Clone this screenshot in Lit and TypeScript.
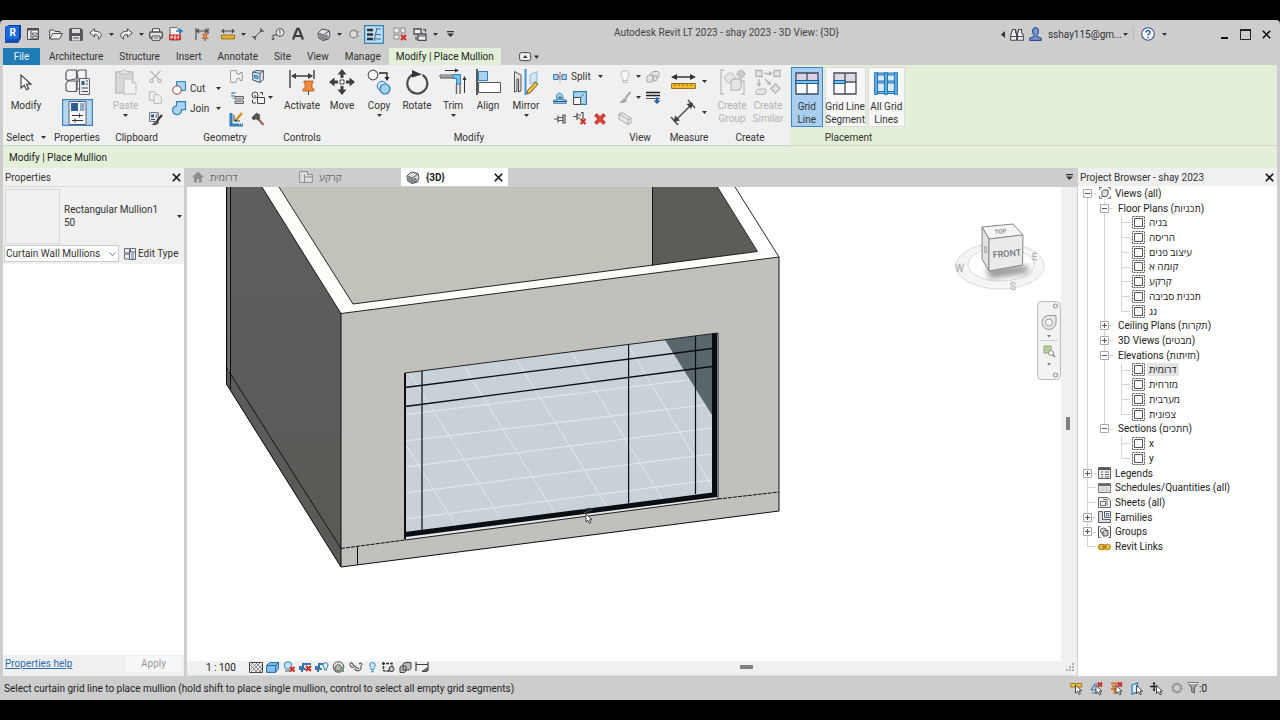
import { LitElement, html, svg, css, nothing } from "lit";
import { customElement, state } from "lit/decorators.js";
import { classMap } from "lit/directives/class-map.js";

const K = "#4a4d52";
const B = "#2f7fb8";
const LB = "#a9d3ef";

const ic = (w: number, h: number, body: unknown, vb = `0 0 ${w} ${h}`) =>
  html`<svg class="ic" width=${w} height=${h} viewBox=${vb} fill="none" aria-hidden="true">${body}</svg>`;

const tri = () => ic(5, 3, svg`<path d="M0 0h5L2.500 3z" fill="#333"/>`);

const cursor = (x: number, y: number) =>
  svg`<path transform="translate(${x} ${y})" d="M0 0v8l2-1.700 1.500 3 1.400-.7L3.500 5.700H6z" fill="#fff" stroke="#222" stroke-width=".8"/>`;

const redX = (x: number, y: number, s = 5) =>
  svg`<path d="M${x} ${y}l${s} ${s}M${x + s} ${y}l${-s} ${s}" stroke="#cf2a27" stroke-width="2"/>`;

const I: Record<string, () => unknown> = {
  logo: () => ic(16, 18, svg`<path d="M0 2 4 0h12v13l-3 5H0z" fill="#0c3f93"/><path d="M0 2h13v16H0z" fill="#164fae"/><path d="M1 1h13v13H1z" fill="#1a6be0"/><text x="4.500" y="11" font-family="Roboto" font-size="10" font-weight="700" fill="#fff">R</text>`),
  home: () => ic(12, 12, svg`<path d="M.5.5h11v11H.5z" fill="#eee" stroke="${K}"/><path d="M.5 1.500h11" stroke="${K}" stroke-width="2"/><path d="M4 3v8.500" stroke="${K}"/><path d="M5.500 5h5v2h-5zM5.500 8.500h5v2h-5z" stroke="${K}" stroke-width=".8"/>`),
  open: () => ic(14, 11, svg`<path d="M.7 10V1h4l1.300 1.500h5V4.500M.7 10l3-5.500h9.800L10.500 10z" fill="#eee" stroke="${K}"/>`),
  save: () => ic(14, 13, svg`<path d="M1 .7h11l1.300 1.300v10.300H.7V1z" fill="#55585d" stroke="${K}"/><path d="M3 1h8v4H3z" fill="#ddd"/><path d="M3 8h8v4.500H3z" fill="#ddd"/><path d="M4 10h6" stroke="${K}"/>`),
  undo: () => ic(14, 12, svg`<path d="M5.500.8.8 5l4.700 4V6.500c3.500 0 4.500 1.500 4 4.700 4-2.500 4.300-8-4-8z" fill="#eee" stroke="${K}"/>`),
  redo: () => ic(14, 12, svg`<path d="M8.500.8 13.200 5l-4.700 4V6.500c-3.500 0-4.500 1.500-4 4.700-4-2.500-4.300-8 4-8z" fill="#eee" stroke="${K}"/>`),
  print: () => ic(14, 13, svg`<path d="M3.500 4V.7h7V4" fill="#fff" stroke="${K}"/><rect x=".7" y="4" width="12.600" height="6" rx="1" fill="#e5e5e5" stroke="${K}" stroke-width="1.300"/><path d="M3 8h8v4.300H3z" fill="#fff" stroke="${K}"/><path d="M4.500 10h5" stroke="${K}"/>`),
  pdf: () => ic(14, 14, svg`<path d="M1 .6h7l3 3V13H1z" fill="#f4f4f4" stroke="#666"/><path d="M0 7.500h12V13H0z" fill="#cf2a27"/><path d="M7 4h5M10 1.800 13 4l-3 2.400" stroke="${B}" stroke-width="1.600"/><path d="M2 12V9h1.500v1.500H2M5.500 9v3h1l.5-1.500L6.500 9zM9 12V9h1.500M9 10.500h1.200" stroke="#fff" stroke-width=".8"/>`),
  dimpin: () => ic(14, 13, svg`<path d="M1 0v12M13 0v6M2 3h10M4 1 2 3l2 2M10 1l2 2-2 2" stroke="${K}" stroke-width="1.200"/><path d="M7.500 6h5l-1 1v2l1.500 1.500h-6L8.500 9V7z" fill="#f09040" stroke="#b5541c" stroke-width=".7"/><path d="M10 10.500V13" stroke="${K}"/>`),
  ruler: () => ic(14, 11, svg`<path d="M1 2h12M3 .3 1 2l2 1.700M11 .3 13 2l-2 1.700" stroke="${K}" stroke-width="1.200"/><path d="M.5 6h13v4H.5z" fill="#e9b02f" stroke="#8d6610" stroke-width=".8"/>`),
  aligned: () => ic(14, 14, svg`<path d="M3 11 11 3M1 9l4 4M9 1l4 4" stroke="${K}"/><path d="m2.500 11.500.5-3 2.500 2.500zM11.500 2.500l-3 .5L11 5.500z" fill="${K}"/>`),
  tag: () => ic(14, 13, svg`<circle cx="9" cy="4.500" r="3.900" fill="#eee" stroke="${K}"/><path d="M9 2.500v4M8 3.200l1-.7M5.500 7 2 7v5M.5 10 2 12l1.500-2" stroke="${K}"/>`),
  textA: () => ic(12, 12, svg`<path d="M1 11.500 5.200.8h1.600L11 11.500M2.800 8h6.400" stroke="#3b3d40" stroke-width="2.200"/>`),
  box3d: () => ic(14, 13, svg`<path d="M1 5 5 1l7 1.500 1 4-1.500 4.500L6 12.500 1.500 10z" fill="#ddd" stroke="${K}"/><path d="m1 5 5.500 2L12 3M6.500 7 6 12.500M8 8v3.500l2-.7V7.300z" stroke="${K}"/><path d="m1 5 5.500 2L6 12.500 1.500 10z" fill="#8b8e92"/>`),
  section: () => ic(12, 12, svg`<path d="m6 1 3 2h2.500L9.500 6l2 3H9l-3 2-4.500-5z" fill="#a2a2a2"/><circle cx="5.500" cy="6" r="3.700" fill="#ddd" stroke="#8a8a8a" stroke-width="1.200"/>`),
  thin: () => ic(20, 19, svg`<path d="M.6.6h18.800v17.800H.6z" fill="#bcdcf5" stroke="${B}" stroke-width="1.200"/><path d="M3 5h6M3 9.500h6M3 14h6" stroke="#2b3036" stroke-width="2.600"/><path d="M12 4h5M11 9.500h6M10 14h7M13 3l-3 13" stroke="#3f6f96"/>`),
  closeHid: () => ic(14, 14, svg`<path d="M1 1h5v5H1zM8 1h4v5H8zM1 8h5v4H1z" fill="#eee" stroke="#8a8d90"/>${redX(8, 8)}`),
  switchW: () => ic(14, 13, svg`<path d="M1 1h7v5H1zM5 6h8v6.300H5z" fill="#eee" stroke="${K}" stroke-width="1.300"/><path d="M5 8h8M10 1.500h2.500V4M3 8.500V11h1.500" stroke="${K}" stroke-width="1.200"/>`),
  custom: () => ic(7, 6, svg`<path d="M0 .6h7" stroke="#333" stroke-width="1.200"/><path d="M0 2.500h7L3.500 6z" fill="#333"/>`),
  binoc: () => ic(14, 13, svg`<path d="M2.500 1.500h3v3l1 1v6.800H.7V7zM8.500 1.500h3v3L13.300 7v5.300H7.500V5.500z" fill="#f2f2f2" stroke="${K}" stroke-width="1.100"/><path d="M1 8.500h5.500M7.500 8.500H13M5.500 4h3" stroke="${K}"/>`),
  user: () => ic(13, 14, svg`<path d="M6.500.6C4.500.6 3.300 2 3.500 4.500c.1 2 1 3.200 1.500 3.700v1.300L.7 11.200v2.200h11.600v-2.200L8 9.500V8.200c.5-.5 1.400-1.700 1.500-3.700C9.700 2 8.500.6 6.500.6z" fill="#6f93cf" stroke="#24407c"/>`),
  help: () => ic(14, 14, svg`<circle cx="7" cy="7" r="6.300" fill="#fff" stroke="#38507a" stroke-width="1.100"/><path d="M5 5.500c0-3 4.300-2.500 4 0C8.800 7 7 6.800 7 8.500M7 9.700v1.500" stroke="#2458b0" stroke-width="1.500"/>`),
  min: () => ic(8, 12, svg`<path d="M0 10h7" stroke="#111" stroke-width="2"/>`),
  max: () => ic(11, 11, svg`<path d="M.5 1h10v9.500H.5z" stroke="#222"/><path d="M0 1h11" stroke="#222" stroke-width="2"/>`),
  x: () => ic(9, 9, svg`<path d="m.8.8 7.400 7.400M8.200.8.8 8.200" stroke="#111" stroke-width="1.600"/>`),
  arrow: () => ic(12, 17, svg`<path d="M1 1v13l3.300-2.800 2.200 4.500 2.200-1-2.200-4.500H11z" fill="#fff" stroke="#444" stroke-width="1.200"/>`),
  family: () => ic(25, 26, svg`<g fill="#f3f3f3" stroke="#565b63" stroke-width="1.200"><path d="M1 3.500 3 1h8.500v9H10L3 11.500 1 10z"/><path d="M12 3.500 14 1h7v9h-8z"/><path d="M1 14.500 3 12h8.500v10.500H3L1 21z"/><path d="M12 12h8v8h-8z"/></g><path d="M14.500 9.500h10v16h-10z" fill="#eceef2" stroke="#60646c"/><path d="M16.500 12h3v4h-3z" fill="#2d5d92"/><path d="M21 12h2M21 15h2M16.500 19h6.500M16.500 22.500h6.500" stroke="#444"/>`),
  props: () => ic(31, 27, svg`<path d="M.6.6h29.800v25.800H.6z" fill="#b5d6f2" stroke="#3f83bd" stroke-width="1.200"/><path d="M7 2.500h17v23H7z" fill="#f6f7f9" stroke="#5a6068"/><path d="M9 4h7v8H9z" fill="#2b5c95"/><path d="M18 4h4.500v8H18z" fill="#91a9c6"/><path d="M10 16.500h11M10 21.500h11M17.500 14.500v4M13 19.500v4" stroke="#333"/>`),
  paste: () => ic(22, 26, svg`<g stroke="#bdbdbd" fill="#e6e6e6"><path d="M.7 3h17v21H.7z" fill="#d8d8d8" stroke-width="1.300"/><path d="M5 5V2.500h2.500C8 0 11 0 11.500 2.500H14V5z"/><path d="M9 10h8l4 4v11H9z" fill="#f2f2f2"/><path d="M17 10v4h4"/></g>`),
  cutS: () => ic(13, 13, svg`<g stroke="#b4b4b4" stroke-width="1.200"><path d="m1.500 1 8.500 8.500M11.500 1 3 9.500"/><circle cx="2.500" cy="10.700" r="1.700"/><circle cx="10.500" cy="10.700" r="1.700"/></g>`),
  copyS: () => ic(13, 13, svg`<g stroke="#bbb" fill="#ededed"><path d="M.6.6h5l2 2v7h-7z"/><path d="M5 3.600h4.500L12.400 6.500v6H5z"/></g>`),
  match: () => ic(14, 14, svg`<path d="M.6.6h8.800v8.800H.6z" fill="#eef" stroke="#6a7078"/><path d="M2 2.500h3v3H2z" fill="#2d5d92"/><path d="M6.500 3h2M6.500 5h2M2 7.500h4" stroke="#444"/><path d="M13 3 8 9" stroke="#333" stroke-width="2"/><path d="M8.500 8.500c-3 0-3 3-6 4 3 1.500 7 .5 7.500-2.500z" fill="#555"/>`),
  gcut: () => ic(14, 14, svg`<path d="M4.500.6h9v8.800h-9z" fill="${LB}" stroke="${B}"/><circle cx="5" cy="9" r="4.200" fill="#fff" stroke="#8e3b35"/>`),
  gjoin: () => ic(14, 14, svg`<path d="M4.500.6h9v8h-4A4.500 4.500 0 1 1 4.500 4.800z" fill="${LB}" stroke="${B}" stroke-width="1.200"/>`),
  cope: () => ic(13, 13, svg`<path d="M.6.6h5.500l1 3.500H10V2.500h2.300v8H10V8.500H7l-1 3.800H.6z" fill="#f2f2f2" stroke="#9a9da2"/>`),
  wallOp: () => ic(12, 13, svg`<path d="M.8 2 8 3.500v9L.8 10z" fill="#e6eef7" stroke="#3b4c66"/><path d="M8 3.500 11.300.8v8.700L8 12.500M.8 2 4 .6l7.300.3" stroke="#3b4c66"/><path d="M2.500 5 6 5.800V9L2.500 8z" fill="#6db2e2" stroke="${B}"/>`),
  beam: () => ic(14, 12, svg`<path d="M1 1h5M1 4h4M3 0v7" stroke="${B}" stroke-dasharray="2 1"/><path d="M5 4.500h8.500v2.500H5zM5 9h8.500v2.500H5z" fill="#ccd" stroke="#555" stroke-width=".9"/>`),
  demo: () => ic(14, 14, svg`<circle cx="4" cy="4" r="3" stroke="#444"/><path d="M6.500 6.500h7v6h-7z" fill="#f4f4f4" stroke="#444"/><path d="M9 1.500h2.500V4M1.500 8.500V12H5M4 4v2" stroke="#444"/>`),
  paint: () => ic(14, 14, svg`<path d="M1 1v12h12" stroke="${B}" stroke-width="3"/><path d="M4 3v6h6" stroke="#3a4550"/><path d="M12 1 6 8" stroke="#d9922c" stroke-width="2.600"/><path d="m5 9.500.5-2.500 2 1.500z" fill="#333"/><path d="M9 12h5" stroke="#fff" stroke-dasharray="1 1"/>`),
  hammer: () => ic(14, 14, svg`<path d="m6.500 6 6 7" stroke="#9b6a4a" stroke-width="2.200"/><path d="M1 5.500 5.500 1.200l3.500 2-1 1 1 1.500L6.500 8 5 6.500 2.500 8z" fill="#555" stroke="#333" stroke-width=".7"/>`),
  activate: () => ic(26, 25, svg`<path d="M1 0v18M25 0v9M3 6h20" stroke="#3c3f44" stroke-width="1.400"/><path d="M2 6l5-3v6zM24 6l-5-3v6z" fill="#3c3f44"/><path d="M15 11h9v2h-1v5l2 1v2H14v-2l2-1v-5h-1z" fill="#f08a3c" stroke="#b5541c" stroke-width=".8"/><path d="M19.500 21v4" stroke="#444"/>`),
  move: () => ic(26, 26, svg`<path d="M13 0l4.500 5.500h-3V9h-3V5.500h-3zM13 26l4.500-5.500h-3V17h-3v3.500h-3zM0 13l5.500-4.500v3H9v3H5.500v3zM26 13l-5.500-4.500v3H17v3h3.500v3z" fill="#3c3f44"/><path d="M11 11h4v4h-4z" fill="#fff" stroke="#444"/>`),
  copy: () => ic(24, 26, svg`<circle cx="6" cy="6" r="4.800" fill="#fff" stroke="#555" stroke-width="1.200"/><circle cx="15" cy="17" r="4.800" fill="#cde6f7" stroke="${B}"/><circle cx="18" cy="20" r="5" fill="#a6d3f2" stroke="${B}" stroke-width="1.200"/><path d="M12 4h8v5" stroke="#222" stroke-width="1.300"/><path d="M17.500 8h5L20 12z" fill="#222"/>`),
  rotate: () => ic(24, 26, svg`<path d="M8 5.500A10 10 0 1 0 17.500 6" stroke="#4a4d50" stroke-width="2.200"/><path d="M7 1l10 4.500L7 8.500z" fill="#333"/>`),
  trim: () => ic(26, 26, svg`<path d="M0 6h15v2H0zM0 9h13" stroke="#555"/><path d="M13 5.500h7.500V15h-4V9.500H13z" fill="#7dbde8" stroke="${B}"/><path d="M16.500 15v10M20 15v10" stroke="#666" stroke-width="1.400"/><path d="M5 1.500h11M24.500 24V10" stroke="#333"/><path d="M15-.5l4 2-4 2zM22.500 11l2-4 2 4z" fill="#333"/>`),
  align: () => ic(25, 26, svg`<path d="M1 0v26" stroke="#333" stroke-width="1.600"/><path d="M2.500 2.500h9v9h-9z" fill="${LB}" stroke="${B}"/><path d="M2.500 13.500h22v10h-22z" fill="#fff" stroke="#555"/>`),
  mirror: () => ic(26, 26, svg`<path d="M1.500 2.500 8 6v16l-2.500 1V10H4v12l-2.500 1z" fill="#e0e0e0" stroke="#555"/><path d="M12.500 0v26" stroke="#3a94d8" stroke-width="2"/><path d="M24 2.500 17 6v9l7-3z" fill="#cfe6f5" stroke="#8ab9d8"/><path d="m22.500 13 2.500 2-7.500 8.500L14 25l.5-3.500z" fill="#f2c43d" stroke="#6b5518"/>`),
  split: () => ic(14, 10, svg`<path d="M.6 2.500h4.500v5H.6zM9 2.500h4.400v5H9z" fill="${LB}" stroke="${B}"/><path d="M7 0v10M5 5h4" stroke="#c0392b" stroke-dasharray="2 1"/>`),
  offset: () => ic(14, 12, svg`<path d="M.7 11.300h12.600V8H10V5.500C10 0 3 0 3.500 5L4.500 8H.7z" fill="${LB}" stroke="${B}"/><path d="M1 9.500h12M6 8V5h2v3" stroke="#34526b"/>`),
  scale: () => ic(14, 14, svg`<path d="M.6.6h12.800v12.800H.6z" fill="#a9d3ef" stroke="${B}" stroke-width="1.200"/><path d="M.6 6.500h7v7h-7z" fill="#fff" stroke="#444"/><path d="m8 6 3-3" stroke="${B}"/>`),
  pin: () => ic(12, 10, svg`<path d="M0 5h4M4 1.500v7M4 3.500h5M4 6.500h5M9 1h2v8H9z" stroke="#555" stroke-width="1.200"/>`),
  unpin: () => ic(14, 13, svg`<path d="M0 4.500h4M4 1v7M4 3h4M4 6h3M8 .6h2v7" stroke="#555" stroke-width="1.200"/>${redX(7.5, 7)}`),
  del: () => ic(12, 12, svg`<path d="m1.500 1.500 9 9M10.500 1.500l-9 9" stroke="#a82420" stroke-width="3.600"/><path d="m1.500 1.500 9 9M10.500 1.500l-9 9" stroke="#e5483f" stroke-width="2"/>`),
  bulbG: () => ic(10, 14, svg`<path d="M3 10C3 8 1 7.500 1 4.500a4 4 0 0 1 8 0C9 7.500 7 8 7 10v2.500H3zM3 10.500h4" fill="#f6f6f6" stroke="#bdbdbd"/>`),
  boxesG: () => ic(14, 13, svg`<g fill="#e4e4e4" stroke="#a5a5a5"><path d="M5 3.500 7 1.500h5l1 1v4l-2 1.500H5z"/><path d="M1 6.500 3 5h4v6l-2 1H1zM7 6h4v4L9 11H7z"/></g>`),
  brushG: () => ic(14, 13, svg`<path d="m12.500 1-5 6" stroke="#aaa" stroke-width="2"/><path d="M7.500 7c-3 0-3 3-6.500 4.500 3 1.200 8 .5 8-3z" fill="#aaa"/>`),
  lines: () => ic(14, 13, svg`<path d="M0 1.500h14M0 4.500h14" stroke="#222" stroke-width="1.600"/><path d="M0 7.500h14" stroke="#555"/><path d="M11 6.500v5" stroke="#1e62a8" stroke-width="2.400"/><path d="M7.500 9.500h7L11 13z" fill="#1e62a8"/>`),
  wallG: () => ic(14, 13, svg`<path d="m1 2 3-1.500L13 6v5l-3 1.500L1 7z M1 2l9 5.500v5M10 7.500 13 6" fill="#e9e9e9" stroke="#a9a9a9"/>`),
  measure: () => ic(25, 17, svg`<path d="M3 4h19" stroke="#333" stroke-width="1.400"/><path d="M0 4l6-3v6zM25 4l-6-3v6z" fill="#333"/><path d="M.6 10.500h23.800v5H.6z" fill="#f0b92e" stroke="#9a7218"/><path d="M4 11v2M8 11v2M12 11v2M16 11v2M20 11v2" stroke="#8a6412"/>`),
  dim2: () => ic(25, 25, svg`<path d="M4 21 21 4M0 17l7 8M17 0l7 8" stroke="#3c3f44" stroke-width="1.300"/><path d="m2.500 22 1.700-6.500L9 20.500zM22 2.500 15.500 4l4.800 5z" fill="#3c3f44"/>`),
  cgroup: () => ic(25, 26, svg`<g stroke="#bdbdbd" fill="#e6e6e6"><path d="M4 1H1v24h3M20 12h4v13h-3" fill="none" stroke-width="1.300"/><circle cx="10" cy="9" r="5"/><path d="M11 12.500 13 10h8v9l-2 2h-8z" stroke-width="1.300"/><circle cx="21" cy="5" r="3.500" fill="#ccc"/><path d="M21 0v10M16 5h10M17.500 1.500l7 7M24.500 1.500l-7 7" stroke-dasharray="2 6"/></g>`),
  csim: () => ic(26, 26, svg`<g stroke="#b5b5b5" fill="#e4e4e4"><path d="M1 1.500h6v6H1zM19 1.500h6v6h-6z" stroke-width="1.300"/><path d="M9 4.500h7M4 10v6M10 10l5 5" fill="none" stroke-width="1.300"/><path d="M14 2l4 2.500L14 7zM1.500 14h5L4 18zM16 16l-4.500-1L15 11.500z" fill="#b5b5b5" stroke="none"/><path d="M1 22l2-2h8v4l-2 1.500H1z"/><path d="M20.500 15l4.500 4.500-4.500 4.500-4.500-4.500z" stroke-width="1.300"/></g>`),
  g1: () => ic(24, 23, svg`<path d="M1 1h22v21H1z" fill="#fff"/><path d="M1 1h22v7H1z" fill="#d9d3e4"/><path d="M1 1h22v21H1zM12 1v21" stroke="#3d4d60" stroke-width="1.300"/><path d="M.6 8.500h22.800v3H.6z" fill="#7cc0ee" stroke="#1c5d94" stroke-width="1.100"/>`),
  g2: () => ic(24, 23, svg`<path d="M1 1h22v21H1z" fill="#fff"/><path d="M1 1h22v8H1z" fill="#ddd8e4"/><path d="M1 1h22v21H1zM12 1v21M1 10h22" stroke="#454a55" stroke-width="1.300"/><path d="M1 8.500h11v3H1z" fill="#7cc0ee" stroke="#1c5d94" stroke-width="1.100"/>`),
  g3: () => ic(24, 23, svg`<path d="M1 1h22v21H1z" fill="#d9ebf7"/><g stroke="#2676b3" fill="#5fb0e6"><path d="M.6.6h3v21.800h-3zM10.500.6h3v21.800h-3zM20.400.6h3v21.800h-3z"/></g><path d="M4 1h6v2H4zM14 1h6v2h-6zM4 9h6v2H4zM14 9h6v2h-6zM4 19.500h6v2H4zM14 19.500h6v2h-6z" fill="#8cc8ef" stroke="#2676b3"/>`),
  tabHome: () => ic(12, 12, svg`<path d="M0 6.500 6 .5l6 6H9.800v5H7V8H5v3.500H2.200v-5z" fill="#8d8d8d"/>`),
  tabPlan: () => ic(14, 12, svg`<path d="M.6.600h8v3h4.800v7.800H.6zM5.500 3.600v7.800M5.500 6h8" fill="#ddd" stroke="#8d8d8d"/>`),
  pageView: () => ic(20, 10, svg`<rect x=".6" y=".6" width="11" height="8" rx="2" fill="#eee" stroke="#444"/><path d="M4 6h4.500L6.200 3z" fill="#333"/><path d="M15 3.500h5L17.500 7z" fill="#333"/>`),
  etype: () => ic(12, 12, svg`<path d="M.5.5h5v4.500h-5zM6.500.5h5v4.500h-5zM.5 6h5v5h-5z" fill="#eee" stroke="#555b66" stroke-width=".9"/><path d="M5.500 4h6v7.500h-6z" fill="#eef1f7" stroke="#44506a" stroke-width=".9"/><path d="M7 6h3M7 8h3M7 10h3" stroke="#44506a" stroke-width=".8"/>`),
  tViews: () => ic(12, 12, svg`<path d="M.6 3V.6H3M9 .6h2.400V3M.6 9v2.400H3M9 11.400h2.400V9" stroke="#666"/><path d="M3 4.500 4.500 3H9v4.500L7.500 9.500H3z" fill="#e2e2e2" stroke="#555"/>`),
  tView: () => ic(13, 13, svg`<path d="M.5.5h12v12H.5z" stroke="#555" stroke-dasharray="2 1"/><path d="M2.500 2.500h8v8h-8z" fill="#fff" stroke="#555"/>`),
  tLeg: () => ic(13, 12, svg`<path d="M.5.5h12v11H.5z" fill="#eee" stroke="#666"/><path d="M.5 2h12" stroke="#555" stroke-width="2"/><path d="M3 5h2M3 7.500h2M3 10h2M7 5h4M7 7.500h4M7 10h4" stroke="#666"/>`),
  tSch: () => ic(13, 10, svg`<path d="M.5.500h12v9H.5z" fill="#eee" stroke="#777"/><path d="M.5 2h12" stroke="#666" stroke-width="2"/><path d="M.5 5h12M.5 7.200h12M4.500 3v6M8.500 3v6" stroke="#bbb" stroke-width=".7"/>`),
  tSheet: () => ic(13, 11, svg`<path d="M.5.5h9l3 3v7H.5z" fill="#eee" stroke="#666"/><path d="M2.500 8.500v-4h5v4zM5 2.500h4v6" stroke="#666" stroke-width=".9"/>`),
  tFam: () => ic(13, 12, svg`<path d="M.5.500h4v8h8v3H.5z" fill="#ddd" stroke="#555b6a"/><path d="M6.500.5h6v6h-6z" fill="#eee" stroke="#555b6a"/><path d="M8.500 2.500h2V5h-2z" stroke="#555b6a" stroke-width=".8"/>`),
  tGrp: () => ic(13, 12, svg`<path d="M2.500.5h-2v11h2M10.500.5h2v11h-2" stroke="#555"/><circle cx="5.500" cy="5" r="3" fill="#ddd" stroke="#555"/><path d="M5 6 6.500 4.500H10V9L9 10H5z" fill="#ccc" stroke="#555"/>`),
  tLink: () => ic(13, 8, svg`<rect x=".8" y="1.500" width="6" height="5" rx="2.400" fill="#ecc860" stroke="#b98a1c" stroke-width="1.600"/><rect x="6.200" y="1.500" width="6" height="5" rx="2.400" fill="#ecc860" stroke="#c99b2a" stroke-width="1.600"/><path d="M4 4h5" stroke="#8d6610" stroke-width="1.200"/>`),
  v0: () => ic(14, 11, svg`<path d="M.5.5h13v10H.5z" fill="#eee" stroke="#444"/><path d="m1 4 3-3M1 8l7-7M2 10l9-9M6 10l7-7M10 10l3-3M3 1l9 9M7 1l6 6M1 3l7 7" stroke="#555" stroke-width=".6"/>`),
  v1: () => ic(13, 11, svg`<path d="M.6 3.500 3.500.6h9v6L9.500 10.400H.6z" fill="#7dc0ec" stroke="#276a9e"/><path d="M.6 3.500h9v6.900M9.500 3.500l3-2.900" stroke="#276a9e"/>`),
  v2: () => ic(13, 12, svg`<circle cx="5" cy="4.500" r="3.800" fill="#bfe0f5" stroke="#4084b5"/><path d="M2 10h5" stroke="#555"/>${redX(7, 6, 4.5)}`),
  v3: () => ic(14, 11, svg`<path d="M1 8V5h3V2h8M3 10V7h4" stroke="#3a79ab" stroke-width="2"/>${redX(7, 4)}`),
  v4: () => ic(14, 11, svg`<path d="M1 8V5h3V2h5M3 10V7h4" stroke="#3a79ab" stroke-width="2"/><path d="M8 3c0-3 5-3 5 0 0 2-1.500 2-1.500 5h-2C9.500 5 8 5 8 3z" fill="#d7edf9" stroke="#3a79ab"/>`),
  v5: () => ic(13, 12, svg`<circle cx="6.500" cy="6" r="5.300" fill="#e2e8e2" stroke="#555"/><path d="m3 6 3.500-3L10 6v4H3z" fill="#aeb7ae" stroke="#555"/><path d="M8 7h4v4H8z" fill="#7a9a80"/>`),
  v6: () => ic(14, 10, svg`<path d="M1 2c1-2 3-1 3 1l6 4M10 2c2-2 3 0 3 1M1 2c0 3 2 4 4 3M6 6c0 3 4 4 6 1V3" stroke="#555" stroke-width="1.100"/>`),
  v7: () => ic(7, 11, svg`<path d="M2.200 7.500C2.200 5.500.8 5 .8 3.200a2.700 2.700 0 0 1 5.400 0C6.200 5 4.800 5.500 4.800 7.500z" fill="#cdeafa" stroke="#2b87c8"/><path d="M2.300 9.500h2.400" stroke="#2b87c8" stroke-width="1.500"/>`),
  v8: () => ic(13, 11, svg`<path d="M1.500 0v9M0 1.500h10V9H1.500" stroke="#333" stroke-width="1.500" stroke-dasharray="3 1"/><circle cx="9.500" cy="7" r="2.500" fill="#ccc" stroke="#333"/>`),
  v9: () => ic(13, 11, svg`<path d="M4 2 6 .6h6v6L10 8H4zM1 5l1.500-1H7v5l-1.500 1.500H1z" fill="#bbb" stroke="#444"/>`),
  v10: () => ic(14, 11, svg`<path d="M1 0v9M13 0v9M1 2.500h12" stroke="#444" stroke-width="1.200"/><path d="M7 9.500h5V6z" fill="#888" stroke="#444"/>`),
  s0: () => ic(13, 13, svg`<path d="M.7 1.500h11v3.500H.7z" fill="#efc443" stroke="#a67a10"/>${cursor(5.5, 3)}`),
  s1: () => ic(13, 13, svg`<path d="m1 8 4-6h3M1 8h7M2 11h5" stroke="${B}" stroke-width="1.200"/>${redX(8, .5, 4)}${cursor(6, 3.5)}`),
  s2: () => ic(13, 13, svg`<path d="M1 1.500h7M2 4.500h5M1 7h7M4.500 7v5" stroke="#d9722c" stroke-width="1.800"/>${redX(8, .5, 4)}${cursor(6, 3.5)}`),
  s3: () => ic(12, 13, svg`<path d="M1 3 6.500 1v9L1 12z" fill="#d5eaf8" stroke="${B}" stroke-width="1.300"/>${cursor(5.5, 3.5)}`),
  s4: () => ic(13, 13, svg`<path d="M4 .5v8M0 4.500h8" stroke="#222" stroke-width="1.300"/><path d="m2.500 2 1.500-2 1.500 2zM2.500 7.500 4 9.500l1.500-2z" fill="#222"/>${cursor(6.5, 3.5)}`),
  s5: () => ic(12, 12, svg`<circle cx="6" cy="6" r="4" stroke="#999" stroke-width="2"/><circle cx="6" cy="6" r="5.200" stroke="#999" stroke-dasharray="2 2"/>`),
  s6: () => ic(12, 12, svg`<path d="M.8.8h10.400L7.300 6v5.200L4.700 9.500V6z" fill="#a8a8a8" stroke="#555"/><path d="M1 1.500h10" stroke="#eee"/>`),
};

type QatItem = string | { dd: true } | { gap: number };
const QAT: QatItem[] = ["logo", "home", { gap: 1 }, "open", "save", "undo", { dd: true }, "redo", { dd: true }, "print", "pdf", { gap: 2 }, "dimpin", { gap: 2 }, "ruler", { dd: true }, "aligned", "tag", "textA", { gap: 2 }, "box3d", { dd: true }, "section", "thin", { gap: 2 }, "closeHid", "switchW", { dd: true }, "custom"];

const TABS = ["Architecture", "Structure", "Insert", "Annotate", "Site", "View", "Manage"];

interface Row { l: number; t: string; g: string; i?: string; e?: "+" | "-" }
const plans = ["בניה", "הריסה", "עיצוב פנים", "קומה א", "קרקע", "תכנית סביבה", "גג"];
const elevs = ["דרומית", "מזרחית", "מערבית", "צפונית"];
const leaf = (list: string[], mid: string): Row[] =>
  list.map((t, n) => ({ l: 2, t, g: `v${mid}${n === list.length - 1 ? "l" : "t"}`, i: "tView" }));
const TREE: Row[] = [
  { l: 0, t: "Views (all)", g: "f", i: "tViews", e: "-" },
  { l: 1, t: "Floor Plans (תכניות)", g: "vt", e: "-" },
  ...leaf(plans, "v"),
  { l: 1, t: "Ceiling Plans (תקרות)", g: "vt", e: "+" },
  { l: 1, t: "3D Views (מבטים)", g: "vt", e: "+" },
  { l: 1, t: "Elevations (חזיתות)", g: "vt", e: "-" },
  ...leaf(elevs, "v"),
  { l: 1, t: "Sections (חתכים)", g: "vl", e: "-" },
  ...leaf(["x", "y"], "n"),
  { l: 0, t: "Legends", g: "t", i: "tLeg", e: "+" },
  { l: 0, t: "Schedules/Quantities (all)", g: "t", i: "tSch" },
  { l: 0, t: "Sheets (all)", g: "t", i: "tSheet" },
  { l: 0, t: "Families", g: "t", i: "tFam", e: "+" },
  { l: 0, t: "Groups", g: "t", i: "tGrp", e: "+" },
  { l: 0, t: "Revit Links", g: "l", i: "tLink" },
];

@customElement("app-root")
export class AppRoot extends LitElement {
  @state() private picked = "דרומית";
  @state() private placement = "g1";

  static styles = css`
    :host { display: block; min-height: 100vh; font: 10px/13px Roboto, "Open Sans", "Noto Sans", sans-serif; color: #333; background: #000; }
    * { box-sizing: border-box; }
    button { font: inherit; color: inherit; border: 0; background: none; padding: 0; margin: 0; }
    .ic { display: block; flex: none; overflow: visible; }
    .frame { height: 100vh; padding: 20px 0; display: flex; }
    .win { flex: 1; min-width: 0; display: flex; flex-direction: column; background: #cdcdcd; border-radius: 4px 4px 0 0; overflow: hidden; }
    .title { display: flex; height: 28px; align-items: center; padding: 0 3px; }
    .qat { display: flex; align-items: center; flex: none; }
    .cell { width: 20px; height: 22px; display: grid; place-items: center; }
    .dd { width: 10px; height: 22px; display: grid; place-items: center; }
    .gap { width: 6px; }
    .gap.one { width: 3px; }
    .caption { flex: 1; text-align: center; padding: 0 8px 4px 0; white-space: nowrap; color: #444; }
    .acct { display: flex; align-items: center; gap: 5px; }
    .acct .mail { display: flex; align-items: center; gap: 1px; padding-left: 1px; }
    .acct .help { display: flex; align-items: center; gap: 7px; border-left: 1px solid #bbb; padding-left: 7px; }
    .ctl { display: flex; align-items: center; gap: 11px; padding: 0 6px 0 54px; }
    .tabs { display: flex; height: 17px; padding-left: 3px; align-items: stretch; }
    .tab { padding: 0 8px; line-height: 17px; white-space: nowrap; }
    .tab.file { background: #1f7bb4; color: #e8f3fa; width: 37px; margin-right: 1px; }
    .tab.on { background: #e3efd8; color: #222; padding: 0 7px; }
    .tab.pv { margin-left: 10px; }
    .main { flex: 1; min-height: 0; display: flex; flex-direction: column; margin: 0 3px; }
    .ribbon { display: flex; background: #e3efd8; height: 80px; }
    .panel { display: flex; flex-direction: column; background: #f0f0f0; }
    .panel > .body { flex: 1; display: flex; justify-content: center; }
    .panel > .label { height: 15px; text-align: center; white-space: nowrap; display: flex; justify-content: center; align-items: center; gap: 7px; }
    .panel.green { background: none; }
    .p-sel { width: 46px; } .p-prop { width: 56px; } .p-clip { width: 63px; } .p-geo { width: 114px; } .p-ctl { width: 40px; }
    .p-mod { width: 294px; } .p-view { width: 48px; } .p-meas { width: 50px; } .p-cre { width: 76px; padding-right: 4px; } .p-place { width: 117px; }
    .panel > .body.edge { justify-content: space-between; padding: 0 6px 0 2px; }
    .run { display: flex; }
    .big { display: flex; flex-direction: column; align-items: center; padding-top: 4px; }
    .big .pic { height: 26px; display: grid; place-items: center; margin-bottom: 4px; }
    .big > .ic { margin-top: 2px; }
    .w34 { width: 34px; } .w36 { width: 36px; } .w38 { width: 38px; } .w40 { width: 40px; }
    .off { color: #b3b3b3; }
    .place { display: flex; gap: 2px; padding: 2px 2px 3px 1px; }
    .place .big { padding-top: 2px; background: #f7f7f7; border: 1px solid #dcdcdc; height: 60px; }
    .place .big.on { background: #a9cff0; border-color: #3b86c4; }
    .w32 { width: 32px; } .w41 { width: 41px; }
    .small { display: grid; grid-auto-rows: 21px; padding-top: 1px; align-content: start; }
    .small > button { display: grid; place-items: center; }
    .c1 { grid-template-columns: 22px; }
    .c2 { grid-template-columns: 21px 21px; }
    .c3 { grid-template-columns: 20px 20px 20px; }
    .cv { grid-template-columns: 18px 8px 22px; }
    .small > .wide { grid-column: 2 / 4; display: flex; align-items: center; gap: 7px; padding-left: 1px; }
    .ddcol { display: flex; flex-direction: column; justify-content: space-around; width: 10px; }
    .cj { display: flex; flex-direction: column; padding: 13px 5px 0 0; }
    .cj button { height: 20px; display: grid; grid-template-columns: 15px 23px 5px; gap: 3px; align-items: center; text-align: left; }
    .two { display: flex; flex-direction: column; align-items: center; gap: 4px; padding-top: 4px; width: 34px; }
    .m2 { display: grid; grid-template-columns: 30px 12px; grid-template-rows: 32px 30px; place-items: center; }
    .opts { background: #e3efd8; height: 23px; border-top: 1px solid #cfd3cc; padding: 5px 6px; color: #222; }
    .work { flex: 1; min-height: 0; display: grid; grid-template-columns: 184px minmax(0, 1fr) 200px; }
    .work > * { min-height: 0; }
    .props { display: flex; flex-direction: column; background: #f0f0f0; border-right: 3px solid #cdcdcd; }
    .head { height: 18px; display: flex; justify-content: space-between; align-items: center; padding: 0 3px 0 2px; background: #f0f0f0; flex: none; white-space: nowrap; }
    .type { height: 58px; display: flex; align-items: center; gap: 3px; padding: 1px 2px 0 2px; border-top: 1px solid #ddd; text-align: left; }
    .swatch { width: 55px; height: 55px; border: 1px solid #d5d8dc; flex: none; }
    .type .name { flex: 1; padding: 0 1px; }
    .erow { height: 20px; display: flex; align-items: center; gap: 5px; padding: 0 0 1px 1px; }
    .pick { display: grid; width: 115px; align-items: center; }
    .pick > * { grid-area: 1 / 1; }
    .pick .ic { justify-self: end; margin-right: 3px; pointer-events: none; }
    .pick select { appearance: none; font: inherit; color: inherit; width: 100%; height: 17px; border: 1px solid #ccc; background: #fff; padding: 0 1px; border-radius: 0; }
    .edit { display: flex; gap: 2px; align-items: center; white-space: nowrap; }
    .blank { flex: 1; background: #fff; }
    .pfoot { height: 21px; display: flex; justify-content: space-between; align-items: center; padding: 0 3px 4px 2px; }
    .pfoot a { color: #2b6cb0; }
    .apply { width: 55px; height: 16px; background: #f8f8f8; color: #999; }
    .view { display: flex; flex-direction: column; }
    .docs { height: 18px; display: flex; align-items: stretch; flex: none; }
    .doc { display: flex; align-items: center; gap: 6px; width: 107px; padding: 0 5px; color: #666; }
    .doc.on { background: #fff; color: #222; font-weight: 700; }
    .doc.on .ic:last-child { margin-left: auto; }
    .docs .end { margin-left: auto; display: grid; place-items: center; width: 16px; }
    .stage { flex: 1; min-height: 0; display: grid; grid-template-columns: minmax(0, 1fr) 16px; margin-top: 1px; }
    .canvas { position: relative; background: #fff; overflow: hidden; }
    .model { position: absolute; inset: 0; width: 100%; height: 100%; display: block; }
    .cube { position: absolute; right: 14px; top: 34px; }
    .nav { position: absolute; right: 0; top: 114px; }
    .vbar { background: #f0f0f0; padding: 230px 5px 0; }
    .vthumb { width: 4px; height: 13px; background: #808080; }
    .vcb { height: 15px; background: #f0f0f0; display: flex; align-items: center; padding: 0 3px 2px 19px; border-bottom: 1px solid #ddd; flex: none; }
    .scale { color: #222; width: 42px; text-align: left; }
    .vicons { width: 182px; display: grid; grid-template-columns: repeat(11, 1fr); }
    .vicons button { display: grid; place-items: center; }
    .hbar { flex: 1; display: flex; justify-content: center; padding-right: 4px; }
    .hthumb { width: 13px; height: 4px; background: #808080; }
    .browser { display: flex; flex-direction: column; background: #fff; border-left: 1px solid #cdcdcd; }
    .tree { list-style: none; margin: 0; padding: 0 0 0 1px; height: 368px; display: grid; grid-auto-rows: 1fr; }
    .tree li { display: flex; align-items: stretch; white-space: nowrap; color: #222; }
    .g { width: 17px; flex: none; display: grid; place-items: center; background-repeat: no-repeat; }
    .g.v { background-image: linear-gradient(#d5d5d5, #d5d5d5); background-size: 1px 100%; background-position: 8px 0; }
    .g.t { background-image: linear-gradient(#d5d5d5, #d5d5d5), linear-gradient(#d5d5d5, #d5d5d5); background-size: 1px 100%, 9px 1px; background-position: 8px 0, 8px 7px; }
    .g.l { background-image: linear-gradient(#d5d5d5, #d5d5d5), linear-gradient(#d5d5d5, #d5d5d5); background-size: 1px 7px, 9px 1px; background-position: 8px 0, 8px 7px; }
    .g.f { background-image: linear-gradient(#d5d5d5, #d5d5d5), linear-gradient(#d5d5d5, #d5d5d5); background-size: 1px 7px, 9px 1px; background-position: 8px 8px, 8px 7px; }
    .name { padding: 0 2px; align-self: center; line-height: 13px; }
    .lv1 .name { padding-left: 5px; }
    .name.sel { background: #e3e3e3; }
    .status { height: 24px; flex: none; display: flex; align-items: center; justify-content: space-between; padding: 0 73px 0 4px; color: #222; white-space: nowrap; }
    .sicons { display: flex; align-items: center; }
    .sicons button { width: 20px; display: grid; place-items: center; }
    .rt { display: flex; align-items: center; }
  `;

  private big(icon: string, text: string, w: string, dd = false, off = false) {
    const [a, b] = text.split("|");
    return html`<button class="big ${w} ${off ? "off" : ""}"><span class="pic">${I[icon]()}</span><span>${a}${b ? html`<br />${b}` : nothing}</span>${dd ? tri() : nothing}</button>`;
  }
  private sm(icon: string) {
    return html`<button aria-label=${icon}>${I[icon]()}</button>`;
  }
  private placeBtn(id: string, a: string, b: string, w: string) {
    return html`<button class=${classMap({ big: true, [w]: true, on: this.placement === id })} @click=${() => (this.placement = id)}><span class="pic">${I[id]()}</span><span>${a}<br />${b}</span></button>`;
  }

  private ribbon() {
    return html`<section class="ribbon" aria-label="Ribbon">
      <div class="panel p-sel"><div class="body">${this.big("arrow", "Modify", "w40")}</div><div class="label">Select ${tri()}</div></div>
      <div class="panel p-prop"><div class="body"><div class="two">${this.sm("family")}${this.sm("props")}</div></div><div class="label">Properties</div></div>
      <div class="panel p-clip"><div class="body">${this.big("paste", "Paste", "w38", true, true)}<div class="small c1">${this.sm("cutS")}${this.sm("copyS")}${this.sm("match")}</div></div><div class="label">Clipboard</div></div>
      <div class="panel p-geo"><div class="body">
        <div class="cj"><button>${I.gcut()}<span>Cut</span>${tri()}</button><button>${I.gjoin()}<span>Join</span>${tri()}</button></div>
        <div class="small c2">${this.sm("cope")}${this.sm("wallOp")}${this.sm("beam")}${this.sm("demo")}${this.sm("paint")}${this.sm("hammer")}</div>
        <div class="ddcol">${tri()}</div></div><div class="label">Geometry</div></div>
      <div class="panel p-ctl"><div class="body">${this.big("activate", "Activate", "w40")}</div><div class="label">Controls</div></div>
      <div class="panel p-mod"><div class="body edge">
        <div class="run">${this.big("move", "Move", "w36")}${this.big("copy", "Copy", "w38", true)}${this.big("rotate", "Rotate", "w38")}${this.big("trim", "Trim", "w34", true)}${this.big("align", "Align", "w36")}${this.big("mirror", "Mirror", "w40", true)}</div>
        <div class="small c3">${this.sm("split")}<button class="wide">Split ${tri()}</button>${this.sm("offset")}${this.sm("scale")}<span></span>${this.sm("pin")}${this.sm("unpin")}${this.sm("del")}</div>
      </div><div class="label">Modify</div></div>
      <div class="panel p-view"><div class="body"><div class="small cv">${this.sm("bulbG")}<button aria-label="Hide options">${tri()}</button>${this.sm("boxesG")}${this.sm("brushG")}<button aria-label="Override options">${tri()}</button>${this.sm("lines")}${this.sm("wallG")}</div></div><div class="label">View</div></div>
      <div class="panel p-meas"><div class="body"><div class="m2">${this.sm("measure")}<span>${tri()}</span>${this.sm("dim2")}<span>${tri()}</span></div></div><div class="label">Measure</div></div>
      <div class="panel p-cre"><div class="body">${this.big("cgroup", "Create|Group", "w36", false, true)}${this.big("csim", "Create|Similar", "w36", false, true)}</div><div class="label">Create</div></div>
      <div class="panel green p-place"><div class="body place">${this.placeBtn("g1", "Grid", "Line", "w32")}${this.placeBtn("g2", "Grid Line", "Segment", "w41")}${this.placeBtn("g3", "All Grid", "Lines", "w38")}</div><div class="label">Placement</div></div>
    </section>`;
  }

  private model() {
    const tileRows = [[414.5, 377], [441, 404], [467, 428], [493, 454], [519, 480], [546, 506]];
    const tileCols = [[378, 400, 460, 532], [404, 364, 500, 517], [459, 358, 554, 512], [513, 354, 606, 505], [569, 348, 666, 505], [628, 345, 720, 500]];
    return html`<svg class="model" role="img" aria-label="3D model view">
      <defs>
        <clipPath id="glass"><path d="M405 373 718 333v164L405 536z"/></clipPath>
        <linearGradient id="side" x1="0" y1="0" x2="0" y2="1"><stop offset="0" stop-color="#5e5e5f"/><stop offset="1" stop-color="#5a5955"/></linearGradient>
      </defs>
      <g transform="translate(-187 -187)" stroke-linejoin="round">
        <path d="M279 187H652v79L353 304z" fill="#c2c1ba"/>
        <path d="M652 187h65.500l40 64.500L652 266z" fill="#5d5d58"/>
        <path d="M262 187h17l74 117 404.500-52.500L717.500 187H735l44 70-438 56.500z" fill="#fdfdfa"/>
        <path d="M735 187h-17.500l40 64.500 21.500 5.500z" fill="#fff"/>
        <path d="M226 187h36l79 126.500V567L226 384z" fill="url(#side)"/>
        <path d="M341 313.500 779 257v254l-438 56z" fill="#c2c0ba"/>
        <path d="M405 373 718 333v166l-313 41z" fill="#c8d1d8"/>
        <g clip-path="url(#glass)">
          <g stroke="#e3e9ed" stroke-width="1">
            ${tileRows.map(([a, b]) => svg`<path d="M405 ${a} 712 ${b}"/>`)}
            ${tileCols.map(([a, b, c, d]) => svg`<path d="M${a} ${b} ${c} ${d}"/>`)}
          </g>
          <path d="M665 340 712 334v81z" fill="#59666a"/>
        </g>
        <path d="M405 538.500 718 498" stroke="#e9e9e6" stroke-width="2"/>
        <g fill="none" stroke="#0a0d12">
          <path d="M279 187 353 304 757.500 251.500 717.500 187M262 187 341 313.500 779 257 735 187M652.500 187v79" stroke-width=".9"/>
          <path d="M226.500 187v197L341 567l438-56V257M341 313.500V567M230.500 187v202" stroke-width="1"/>
          <path d="M226 367 341 548.500" stroke-width=".9"/>
          <path d="M341 548.500 405 540M718 499l61-7" stroke-dasharray="4 1"/>
          <path d="M357.500 546.500v18"/>
          <path d="M405 373 718 333v166l-313 41z" stroke-width=".9"/>
          <path d="M405 373v166" stroke-width="2"/>
          <path d="M422 371v160M628.600 345v158M695.500 336v158" stroke-width="1.200"/>
          <path d="M405 387.500 712 348.500M405 406.500 712 366.500" stroke-width="1.300"/>
          <path d="M405 534.500 717 494.500" stroke-width="5"/>
          <path d="M714.500 333.500V497" stroke-width="5"/>
        </g>
        <path d="M229 187v185" stroke="#8a8a8a" stroke-width="1"/>
        <path d="M582 510l8-2m-6 5 9-4" stroke="#555"/>
        ${cursor(586, 514)}
      </g>
    </svg>`;
  }

  private cube() {
    return html`<svg class="cube" width="92" height="76" fill="none" role="img" aria-label="View cube">
      <defs><filter id="soft"><feGaussianBlur stdDeviation="3"/></filter></defs>
      <path fill-rule="evenodd" d="M1 45a44 23 0 1 0 88 0 44 23 0 1 0-88 0zM13 43.500a33 16.500 0 1 0 66 0 33 16.500 0 1 0-66 0z" fill="#f5f5f5" stroke="#c4c4c4" stroke-width=".8" stroke-dasharray="3 1"/>
      <path d="M32 46 72 44l2 8-40 6z" fill="#9a9a9a" filter="url(#soft)"/>
      <path d="m27 6 31-3 10 11-34 4z" fill="#f4f4f4" stroke="#888"/>
      <path d="M27 6 34 18v32l-7-12z" fill="#e1e1e1" stroke="#888"/>
      <path d="M34 18l34-4-.5 30L34 50z" fill="#e9ebec" stroke="#888"/>
      <g font-family="Roboto" fill="#8b8b8b">
        <text x="38" y="37" font-size="9" font-weight="500" transform="rotate(-5 38 37)" fill="#777">FRONT</text>
        <text x="40" y="13" font-size="6" font-weight="700" transform="rotate(-5 40 13)">TOP</text>
        <text x="0" y="51" font-size="10" stroke="#aaa" stroke-width=".5" fill="#fff">W</text>
        <text x="77" y="39" font-size="9" stroke="#aaa" stroke-width=".5" fill="#fff">E</text>
        <text x="55" y="69" font-size="10" stroke="#aaa" stroke-width=".5" fill="#fff">S</text>
      </g>
      <path d="M29.500 25.500h2v6h-2z" stroke="#aaa"/>
    </svg>`;
  }

  private nav() {
    return html`<svg class="nav" width="24" height="80" fill="none" role="img" aria-label="Navigation bar">
      <rect x=".6" y=".6" width="22.800" height="78" rx="4" fill="#f3f3f3" stroke="#b9b9b9"/>
      <circle cx="18.500" cy="5" r="2" stroke="#888"/><circle cx="18.500" cy="74" r="2" stroke="#888"/>
      <path d="M12 14.500h7v7a7 7 0 1 1-7-7z" fill="#e8e8e8" stroke="#9a9a9a"/><circle cx="12" cy="21.500" r="3.500" fill="#fafafa" stroke="#9a9a9a"/>
      <path d="M10 34h4l-2 2.500zM10 62h4l-2 2.500z" fill="#777"/><path d="M3 39.500h18" stroke="#ccc"/>
      <path d="M7 45h7v7H7z" fill="#b5cf9a" stroke="#8fa67a"/><circle cx="14" cy="52" r="2.500" fill="#fff" stroke="#888"/><path d="m16 54 2 2" stroke="#777" stroke-width="1.300"/>
    </svg>`;
  }

  private row(r: Row) {
    const cells = [...r.g];
    return html`<li role="treeitem" class="lv${r.l}" @click=${() => (this.picked = r.t)}>
      ${cells.map((c, n) => html`<span class="g ${c}">${r.e && n === cells.length - 1
        ? ic(9, 9, svg`<path d="M.5.5h8v8h-8z" fill="#fff" stroke="#aaa"/><path d="M2 4.500h5${r.e === "+" ? "M4.500 2v5" : ""}" stroke="#556"/>`) : nothing}</span>`)}
      ${r.i ? html`<span class="g">${I[r.i]()}</span>` : nothing}
      <span class=${classMap({ name: true, sel: this.picked === r.t })}>${r.t}</span>
    </li>`;
  }

  render() {
    return html`<div class="frame"><div class="win">
      <header class="title">
        <div class="qat">${QAT.map((q) => typeof q === "string"
          ? html`<button class="cell" aria-label=${q}>${I[q]()}</button>`
          : "dd" in q ? html`<span class="dd">${tri()}</span>` : html`<span class="gap ${q.gap === 1 ? "one" : ""}"></span>`)}</div>
        <div class="caption">Autodesk Revit LT 2023 - shay 2023 - 3D View: {3D}</div>
        <div class="acct">
          ${ic(4, 7, svg`<path d="M4 0v7L0 3.500z" fill="#333"/>`)}
          <button aria-label="Search">${I.binoc()}</button><button aria-label="Account">${I.user()}</button>
          <button class="mail">sshay115@gm...${tri()}</button>
          <button class="help" aria-label="Help">${I.help()}${tri()}</button>
        </div>
        <div class="ctl"><button aria-label="Minimize">${I.min()}</button><button aria-label="Maximize">${I.max()}</button><button aria-label="Close">${I.x()}</button></div>
      </header>
      <nav class="tabs">
        <button class="tab file">File</button>
        ${TABS.map((t) => html`<button class="tab">${t}</button>`)}
        <button class="tab on">Modify | Place Mullion</button>
        <button class="tab pv" aria-label="Ribbon display">${I.pageView()}</button>
      </nav>
      <div class="main">
        ${this.ribbon()}
        <div class="opts">Modify | Place Mullion</div>
        <div class="work">
          <aside class="props">
            <div class="head">Properties <button aria-label="Close properties">${I.x()}</button></div>
            <button class="type"><span class="swatch"></span><span class="name">Rectangular Mullion1<br />50</span>${tri()}</button>
            <div class="erow">
              <label class="pick"><select aria-label="Category"><option>Curtain Wall Mullions</option></select>${ic(7, 4, svg`<path d="m.5.5 3 3 3-3" stroke="#777"/>`)}</label>
              <button class="edit">${I.etype()} Edit Type</button>
            </div>
            <div class="blank"></div>
            <div class="pfoot"><a href="#help">Properties help</a><button class="apply">Apply</button></div>
          </aside>
          <section class="view">
            <div class="docs">
              <button class="doc">${I.tabHome()}<span>דרומית</span></button>
              <button class="doc">${I.tabPlan()}<span>קרקע</span></button>
              <button class="doc on">${I.box3d()}<span>{3D}</span>${I.x()}</button>
              <button class="end" aria-label="View list">${I.custom()}</button>
            </div>
            <div class="stage"><div class="canvas">${this.model()}${this.cube()}${this.nav()}</div><div class="vbar"><div class="vthumb"></div></div></div>
            <div class="vcb">
              <button class="scale">1 : 100</button>
              <div class="vicons">${[0, 1, 2, 3, 4, 5, 6, 7, 8, 9, 10].map((n) => this.sm("v" + n))}</div>
              <div class="hbar"><div class="hthumb"></div></div>
              ${ic(7, 7, svg`<path d="M5 0h2M5 3h2M5 6h2M2 3h2M2 6h2M-1 6h2" stroke="#999" stroke-width="1.500"/>`)}
            </div>
          </section>
          <aside class="browser">
            <div class="head">Project Browser - shay 2023 <button aria-label="Close browser">${I.x()}</button></div>
            <ul class="tree" role="tree">${TREE.map((r) => this.row(r))}</ul>
          </aside>
        </div>
      </div>
      <footer class="status">
        <span>Select curtain grid line to place mullion (hold shift to place single mullion, control to select all empty grid segments)</span>
        <div class="sicons">${[0, 1, 2, 3, 4, 5].map((n) => this.sm("s" + n))}<span class="rt">${I.s6()}:0</span></div>
      </footer>
    </div></div>`;
  }
}
